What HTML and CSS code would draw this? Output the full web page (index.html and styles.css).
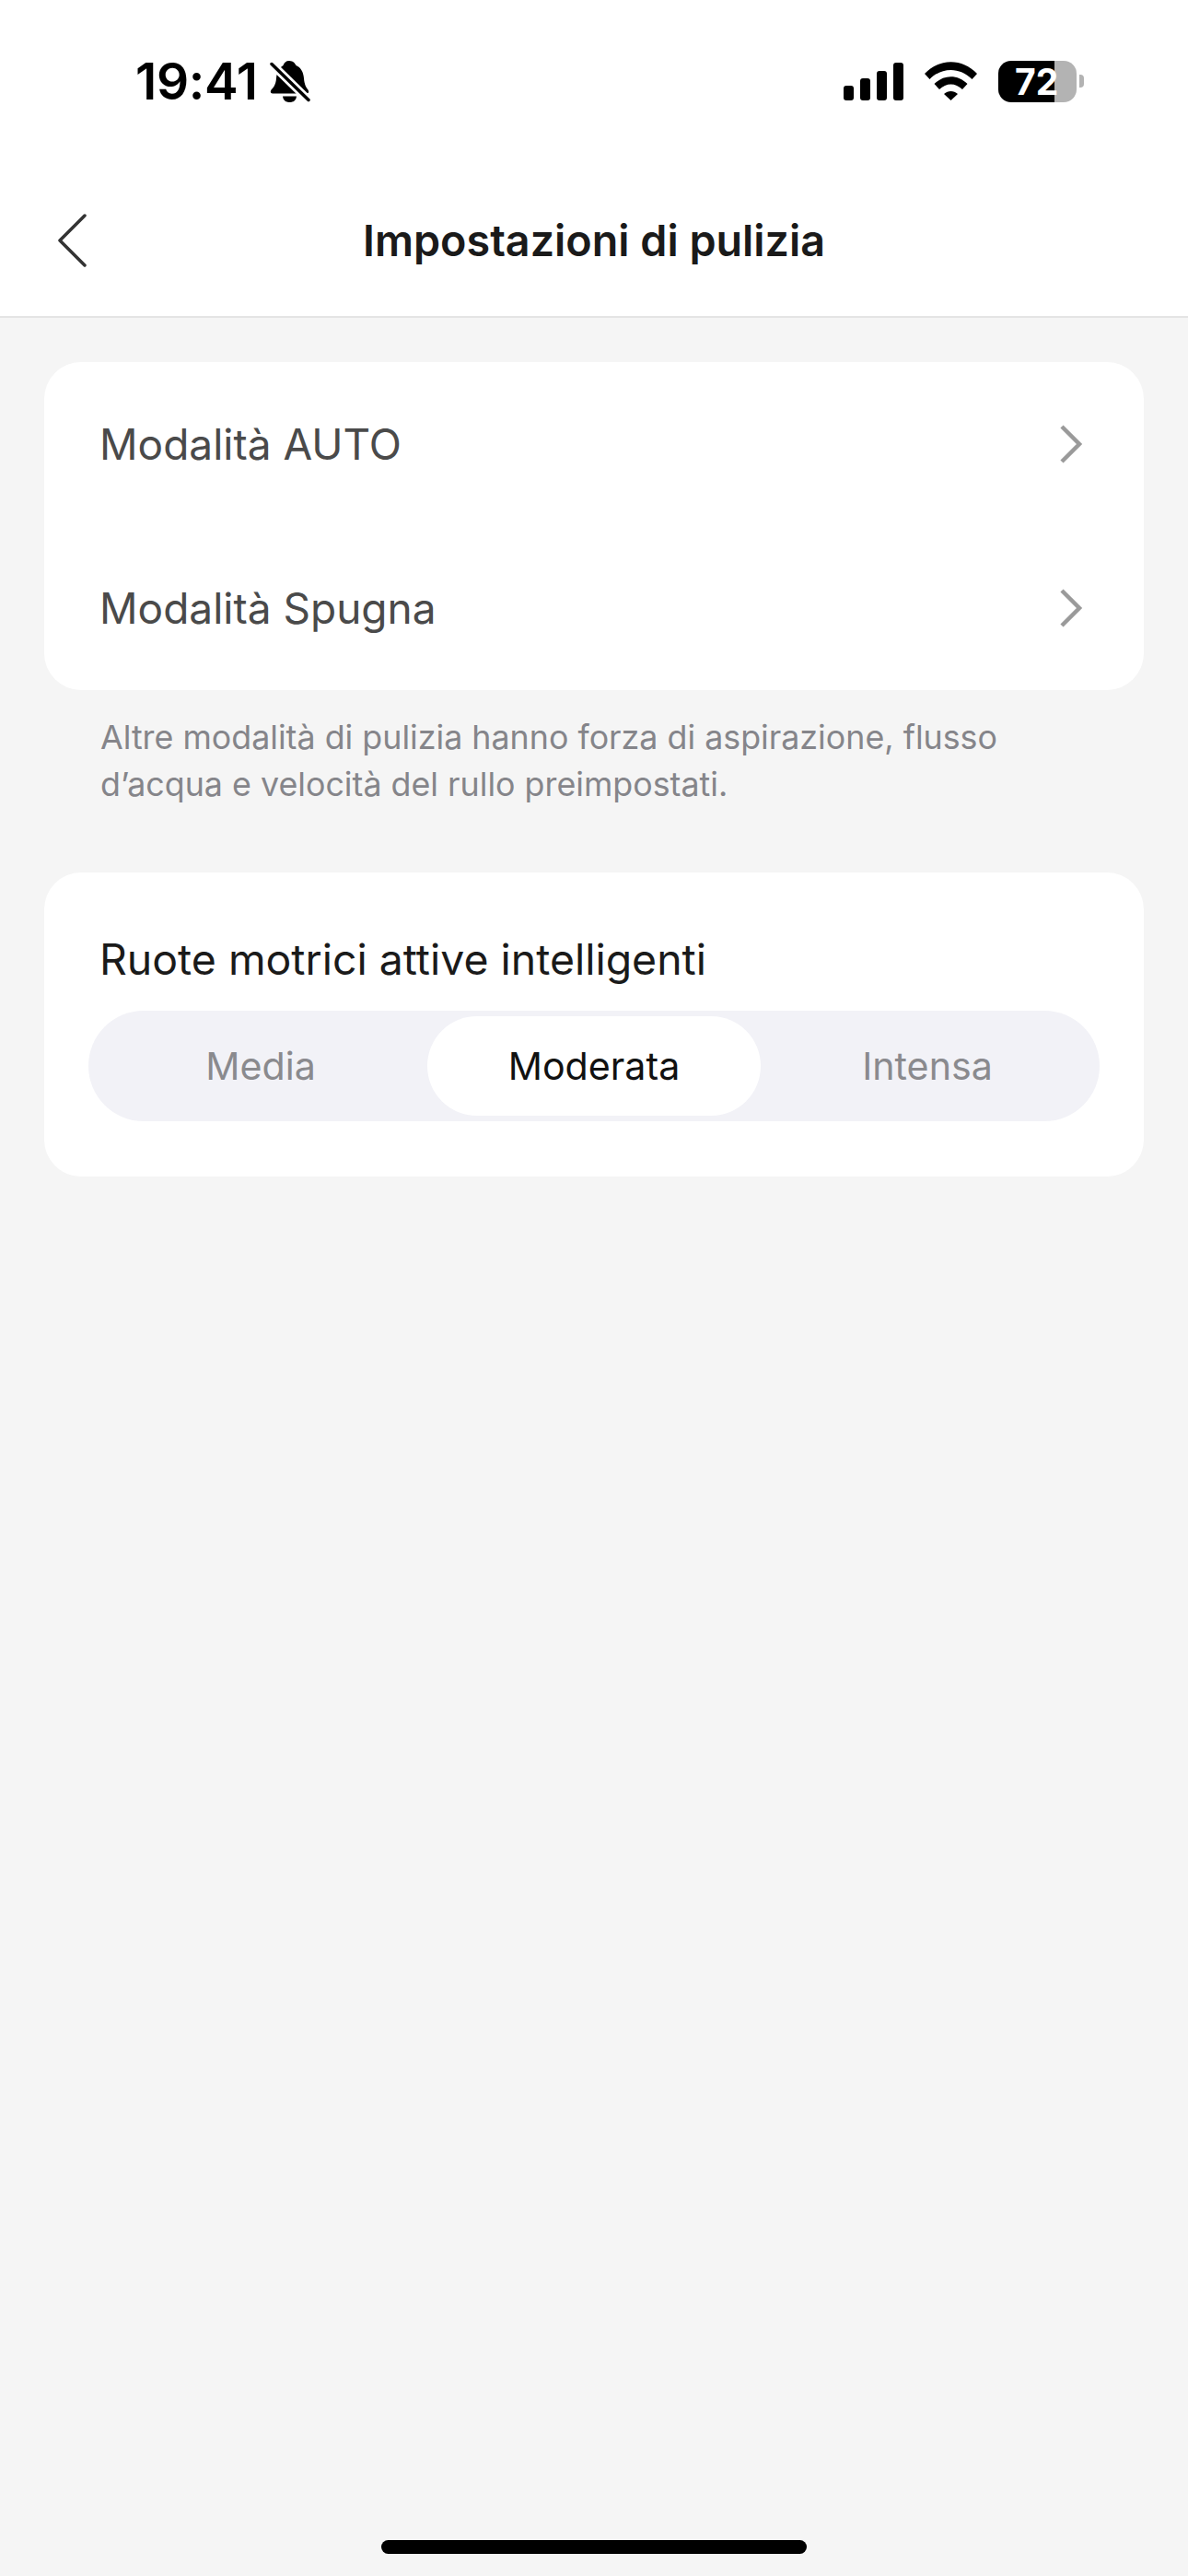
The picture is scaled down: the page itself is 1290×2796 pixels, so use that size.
FILE: index.html
```html
<!DOCTYPE html>
<html lang="it">
	<head>
		<meta charset="utf-8">
		<title>Impostazioni di pulizia</title>
		<meta name="viewport" content="width=device-width, initial-scale=1.0">
		<link rel="stylesheet" href="styles.css">
	</head>
	<body>
		<div class="top">
			<div class="statusbar">
				<div class="status-left">
					<span class="time">19:41</span>
					<svg class="bell" width="44" height="45" viewBox="0 0 44 45">
						<path d="M21 0C25.500 0 27.500 3 28.500 5C33.500 7 36.500 12 37 19C37.500 26 39.500 29 41.500 31.500C43 34 42 35.500 39 35.500H4C1 35.500 0 34 1.500 31.500C4 29 6.500 26 7 19C7.500 12 11 7 14.500 5C15.500 2 17.500 0 21 0Z" fill="#000"/>
						<path d="M14 38.500H29C28.500 43 25.500 45 21.500 45C17.500 45 14.500 43 14 38.500Z" fill="#000"/>
						<path d="M2 3.500L42 42.500" stroke="#fff" stroke-width="9" fill="none"/>
						<path d="M2 3.500L42 42.500" stroke="#000" stroke-width="3.500" stroke-linecap="round" fill="none"/>
					</svg>
				</div>
				<div class="status-right">
					<div class="signal">
						<span class="bar bar1"></span>
						<span class="bar bar2"></span>
						<span class="bar bar3"></span>
						<span class="bar bar4"></span>
					</div>
					<svg class="wifi" width="57" height="42" viewBox="0 0 57 42">
						<path d="M0 13C16 -4 41 -4 57 13L51.500 19C38.500 5.500 18.500 5.500 5.500 19Z" fill="#000"/>
						<path d="M10.500 24C21 13.500 36 13.500 46.500 24L41 30C33.500 22.500 23.500 22.500 16 30Z" fill="#000"/>
						<path d="M21 35C25.500 31 31.500 31 36 35L28.500 42Z" fill="#000"/>
					</svg>
					<div class="battery">
						<div class="battery-body">72</div>
						<span class="battery-nub"></span>
					</div>
				</div>
			</div>
			<div class="navbar">
				<svg class="back" width="34" height="60" viewBox="0 0 34 60">
					<path d="M31 3L4 30L31 57" stroke="#333" stroke-width="3.500" stroke-linecap="round" stroke-linejoin="round" fill="none"/>
				</svg>
				<h1 class="title">Impostazioni di pulizia</h1>
			</div>
		</div>

		<div class="content">
			<div class="card">
				<div class="row">
					<span>Modalità AUTO</span>
					<svg class="chevron" width="26" height="46" viewBox="0 0 26 46">
						<path d="M3 4L22 23L3 42" stroke="#9a9a9a" stroke-width="4.500" fill="none"/>
					</svg>
				</div>
				<div class="row">
					<span>Modalità Spugna</span>
					<svg class="chevron" width="26" height="46" viewBox="0 0 26 46">
						<path d="M3 4L22 23L3 42" stroke="#9a9a9a" stroke-width="4.500" fill="none"/>
					</svg>
				</div>
			</div>
			<p class="note">Altre modalità di pulizia hanno forza di aspirazione, flusso d’acqua e velocità del rullo preimpostati.</p>
			<div class="card card-wheels">
				<div class="wheels-title">Ruote motrici attive intelligenti</div>
				<div class="segment">
					<div class="segment-item">Media</div>
					<div class="segment-item selected">Moderata</div>
					<div class="segment-item">Intensa</div>
				</div>
			</div>
		</div>

		<div class="home-indicator"></div>
	</body>
</html>
```

FILE: styles.css
```css
* {
	box-sizing: border-box;
}
html, body {
	margin: 0;
	padding: 0;
}
body {
	width: 1290px;
	height: 2796px;
	display: flex;
	flex-direction: column;
	background-color: #f5f5f5;
	font-family: "Inter", "Liberation Sans", sans-serif;
	overflow: hidden;
}
.top {
	background-color: #fff;
	border-bottom: 2px solid #e4e4e4;
}
.statusbar {
	height: 178px;
	padding: 0 113px 2px 147px;
	display: flex;
	justify-content: space-between;
	align-items: center;
}
.status-left {
	display: flex;
	align-items: center;
	gap: 13px;
}
.time {
	font-size: 55px;
	font-weight: 600;
	line-height: 60px;
	letter-spacing: -0.300px;
	color: #000;
}
.status-right {
	display: flex;
	align-items: center;
	gap: 23px;
}
.signal {
	display: flex;
	align-items: flex-end;
	gap: 7px;
	height: 41px;
}
.bar {
	width: 11px;
	background-color: #000;
	border-radius: 3px;
}
.bar1 { height: 16px; }
.bar2 { height: 24px; }
.bar3 { height: 32px; }
.bar4 { height: 41px; }
.battery {
	display: flex;
	align-items: center;
	gap: 3px;
}
.battery-body {
	width: 85px;
	height: 45px;
	border-radius: 14px;
	background: linear-gradient(to right, #000 72%, #b3b3b3 72%);
	color: #fff;
	font-size: 39px;
	font-weight: 700;
	line-height: 45px;
	padding-left: 18px;
}
.battery-nub {
	width: 5px;
	height: 14px;
	background-color: #b3b3b3;
	border-radius: 0 4px 4px 0;
}
.navbar {
	height: 165px;
	padding-left: 61px;
	display: flex;
	align-items: center;
	position: relative;
}
.title {
	position: absolute;
	left: 0;
	right: 0;
	margin: 0;
	text-align: center;
	font-size: 46.700px;
	font-weight: 600;
	color: #1a1a1a;
}
.content {
	padding: 48px 48px 0;
	display: flex;
	flex-direction: column;
}
.card {
	background-color: #fff;
	border-radius: 40px;
}
.row {
	height: 178px;
	padding: 0 66px 0 60px;
	display: flex;
	justify-content: space-between;
	align-items: center;
	font-size: 46px;
	color: #4a4a4a;
}
.note {
	margin: 26px 0 70px;
	padding: 0 60px 0 61px;
	font-size: 35.800px;
	line-height: 51px;
	color: #85858a;
}
.card-wheels {
	padding: 0 48px 60px;
}
.wheels-title {
	height: 150px;
	padding: 60px 0 0 12px;
	font-size: 46.400px;
	line-height: 68px;
	color: #1a1a1a;
}
.segment {
	height: 120px;
	padding: 6px;
	display: flex;
	background-color: #f2f2f7;
	border-radius: 60px;
}
.segment-item {
	flex: 1;
	display: flex;
	justify-content: center;
	align-items: center;
	border-radius: 54px;
	font-size: 41.200px;
	color: #8a8a8e;
}
.segment-item.selected {
	background-color: #fff;
	color: #111;
}
.home-indicator {
	position: absolute;
	left: 414px;
	top: 2757px;
	width: 462px;
	height: 15px;
	background-color: #000;
	border-radius: 8px;
}
```
